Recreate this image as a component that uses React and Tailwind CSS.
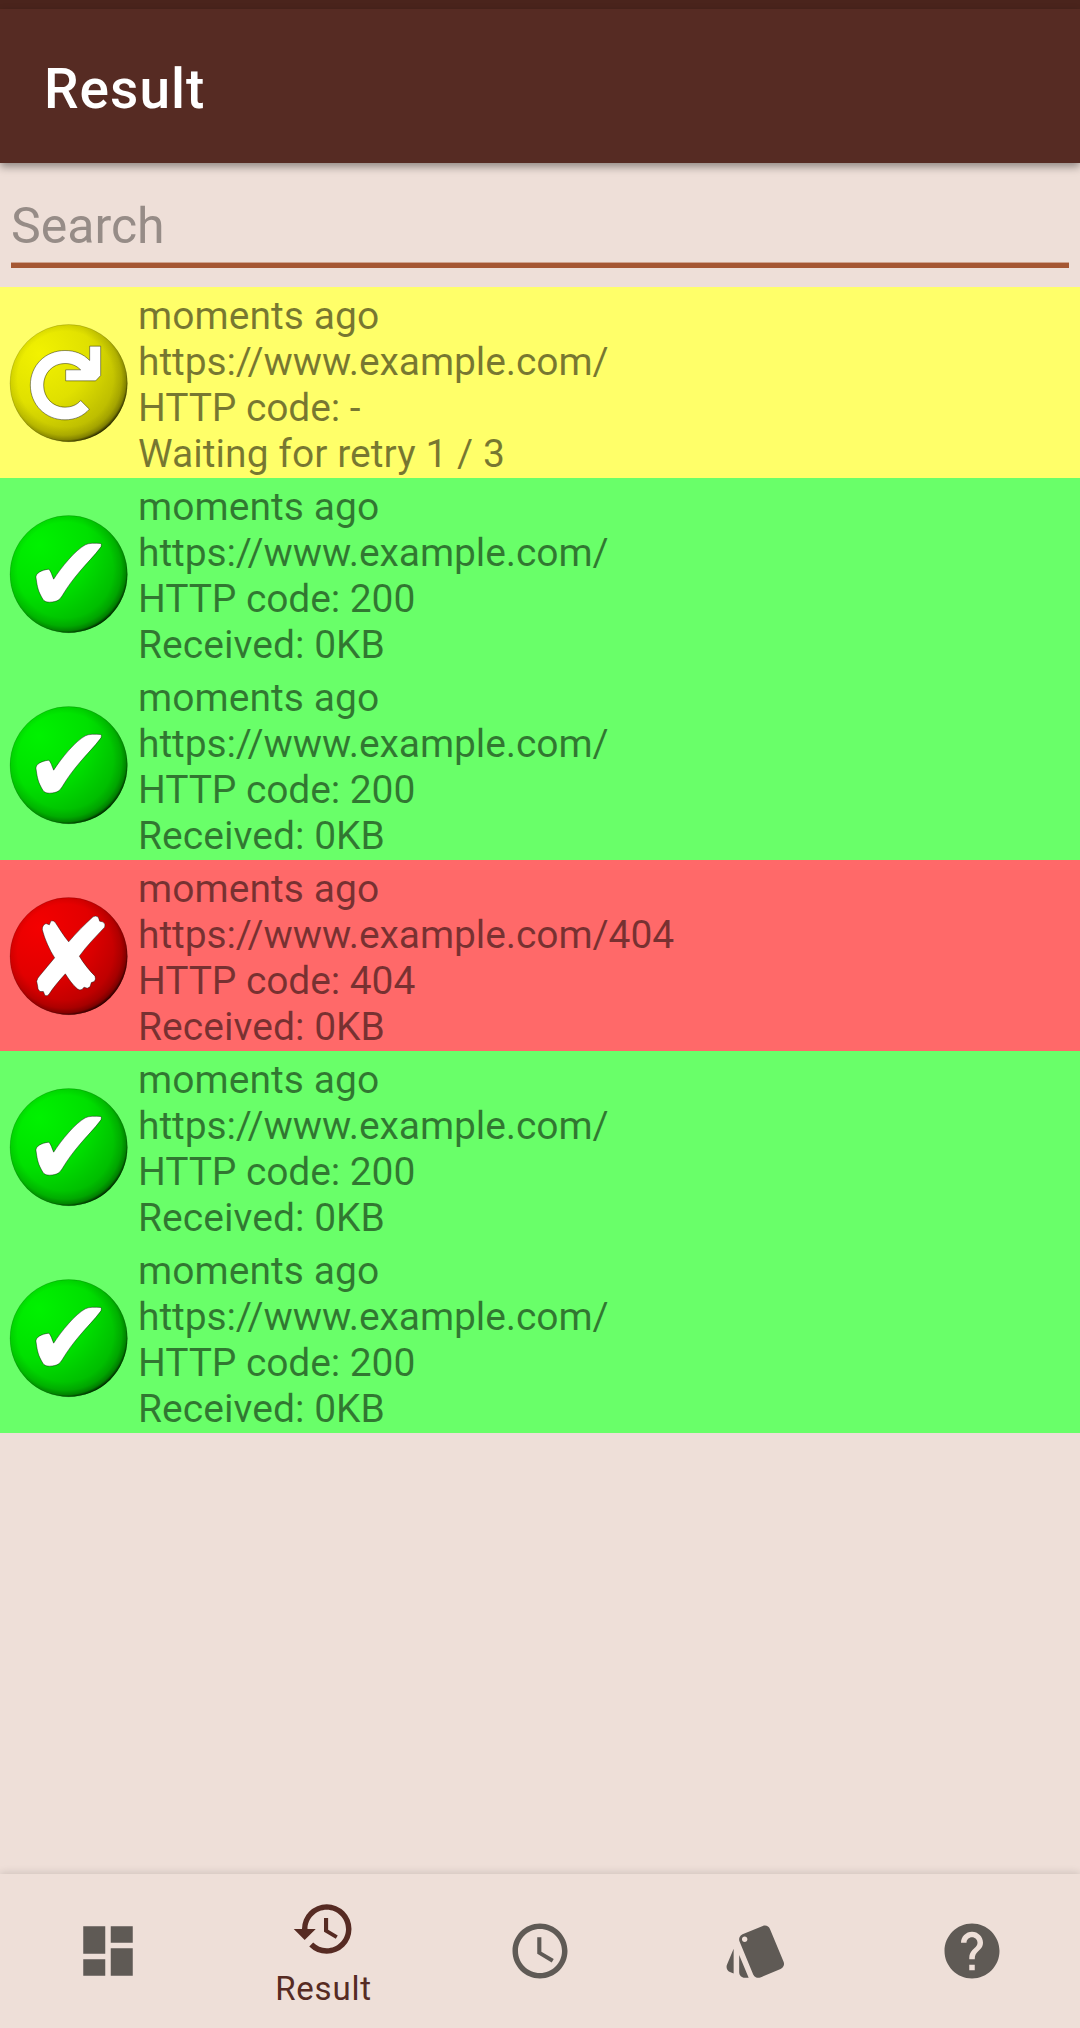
import React from "react";
import { MdDashboard, MdHistory, MdSchedule, MdStyle, MdHelp } from "react-icons/md";

function Ball({ id, cy, top, from, mid, to, children }) {
  return (
    <svg className="ml-[9px] h-[120px] w-[120px] shrink-0" viewBox={`27 ${top} 360 360`}>
      <defs>
        <radialGradient id={id} cx="0.25" cy="0.25" r="0.85">
          <stop offset="0" stopColor={from} />
          <stop offset="0.5" stopColor={mid} />
          <stop offset="1" stopColor={to} />
        </radialGradient>
        <radialGradient id={id + "-rim"} cx="0.472" cy="0.465" r="0.55">
          <stop offset="0.74" stopColor="#000" stopOpacity="0" />
          <stop offset="0.87" stopColor="#000" stopOpacity="0.1" />
          <stop offset="0.94" stopColor="#000" stopOpacity="0.28" />
          <stop offset="1" stopColor="#000" stopOpacity="0.9" />
        </radialGradient>
      </defs>
      <circle cx="206" cy={cy} r="176" fill={`url(#${id})`} />
      <circle cx="206" cy={cy} r="176" fill={`url(#${id}-rim)`} stroke="#000" strokeOpacity="0.2" strokeWidth="2" />
      <g fill="#fff" stroke="#000" strokeOpacity="0.5" strokeWidth="2.5" strokeLinejoin="round">
        {children}
      </g>
    </svg>
  );
}

function RetryIcon({ id }) {
  return (
    <Ball id={id} cy={308} top={127.5} from="#f2f200" mid="#e0e000" to="#aeae00">
      <path d="M269 240 V197 H302 V285 L287 301 H197 V268 H242 C228 254 212 249 195 249 C158 249 131 278 131 314 C131 351 158 380 195 380 C215 380 231 373 242 360 L268 386 C250 407 224 418 195 418 C136 418 91 372 91 314 C91 255 136 210 195 210 C225 210 250 220 269 240 Z" />
    </Ball>
  );
}

function SuccessIcon({ id }) {
  return (
    <Ball id={id} cy={221} top={40.5} from="#00f200" mid="#00e000" to="#00ae00">
      <path d="M108 232 C106 218 124 209 146 206 C153 211 156 225 161 236 C185 199 225 150 256 133 C267 127 285 128 302 129 Q306 131 303 139 C284 165 261 187 240 212 C219 237 203 258 187 285 C179 298 172 304 149 305 C133 305 130 299 124 288 C112 267 111 250 108 232 Z" />
    </Ball>
  );
}

function FailureIcon({ id }) {
  return (
    <Ball id={id} cy={227} top={46.5} from="#f40000" mid="#e20000" to="#ae0000">
      <path d="M206 184 C229 157 255 131 279 109 Q287 104 295 110 L299 122 L308 124 Q318 130 314 140 C287 169 260 196 238 227 C251 249 269 271 285 287 Q289 296 283 303 L274 306 L270 319 L262 323 L252 320 L246 327 Q238 330 232 325 C217 312 207 297 196 280 C177 301 159 322 147 341 Q142 348 135 345 L130 333 L120 333 Q112 327 113 317 L110 302 Q112 293 119 286 C134 268 149 249 164 232 C149 209 134 176 127 148 Q126 134 138 129 L148 133 L153 121 Q161 119 166 126 C179 146 191 166 206 184 Z" />
    </Ball>
  );
}

const OK = "bg-[#69ff69]";
const ROWS = [
  { bg: "bg-[#ffff69]", Icon: RetryIcon, lines: ["moments ago", "https://www.example.com/", "HTTP code: -", "Waiting for retry 1 / 3"] },
  { bg: OK, Icon: SuccessIcon, lines: ["moments ago", "https://www.example.com/", "HTTP code: 200", "Received: 0KB"] },
  { bg: OK, Icon: SuccessIcon, lines: ["moments ago", "https://www.example.com/", "HTTP code: 200", "Received: 0KB"] },
  { bg: "bg-[#ff6969]", Icon: FailureIcon, lines: ["moments ago", "https://www.example.com/404", "HTTP code: 404", "Received: 0KB"] },
  { bg: OK, Icon: SuccessIcon, lines: ["moments ago", "https://www.example.com/", "HTTP code: 200", "Received: 0KB"] },
  { bg: OK, Icon: SuccessIcon, lines: ["moments ago", "https://www.example.com/", "HTTP code: 200", "Received: 0KB"] },
];

function ResultRow({ bg, Icon, lines, index }) {
  return (
    <li className={`flex h-[191px] items-center ${bg}`}>
      <Icon id={`ball-${index}`} />
      <div className="mt-[4px] ml-[9px] text-[39px] leading-[46px] whitespace-nowrap text-black/53">
        {lines.map((line) => (
          <p key={line} className={/^http/i.test(line) ? "tracking-[-0.1px]" : "tracking-[0.04px]"}>
            {line}
          </p>
        ))}
      </div>
    </li>
  );
}

const TABS = [
  { name: "Dashboard", Icon: MdDashboard },
  { name: "Result", Icon: MdHistory, active: true },
  { name: "Schedule", Icon: MdSchedule },
  { name: "Style", Icon: MdStyle },
  { name: "Help", Icon: MdHelp },
];

export default function App() {
  return (
    <div className="flex h-[2028px] w-[1080px] flex-col overflow-hidden bg-[#eedfd8] font-[Roboto,sans-serif]">
      <div className="z-10 h-[9px] shrink-0 bg-[#4a241c]" />
      <header className="z-10 flex h-[154px] shrink-0 items-center bg-[#562b23] pl-11 shadow-[0_4px_8px_rgba(0,0,0,0.38)]">
        <h1 className="mt-[5px] text-[55px] leading-[64px] font-medium tracking-[1px] text-white">Result</h1>
      </header>
      <main className="flex grow flex-col">
        <div className="flex h-[124px] flex-col px-[11px] pt-[34px]">
          <input
            aria-label="Search"
            placeholder="Search"
            className="h-[71px] w-full border-b-[5px] border-[#a55733] bg-transparent pb-[8px] text-[50px] leading-[58px] shadow-[inset_0_-1px_0_#cfa38e] outline-none placeholder:text-[#968c87]"
          />
        </div>
        <ul>
          {ROWS.map((row, i) => (
            <ResultRow key={i} index={i} {...row} />
          ))}
        </ul>
      </main>
      <nav className="grid h-[154px] shrink-0 grid-cols-5 bg-[#eedfd8] shadow-[0_-1px_8px_rgba(0,0,0,0.14)]">
        {TABS.map(({ name, Icon, active }) =>
          active ? (
            <button key={name} className="flex flex-col items-center pt-[22px] text-[#562b23]">
              <Icon className="size-[66px]" />
              <span className="mt-[7px] mr-[1px] text-[33px] leading-[39px] tracking-[0.8px]">{name}</span>
            </button>
          ) : (
            <button key={name} aria-label={name} className="flex justify-center pt-[44px] text-[#5f5a55]">
              <Icon className="size-[66px]" />
            </button>
          )
        )}
      </nav>
    </div>
  );
}
